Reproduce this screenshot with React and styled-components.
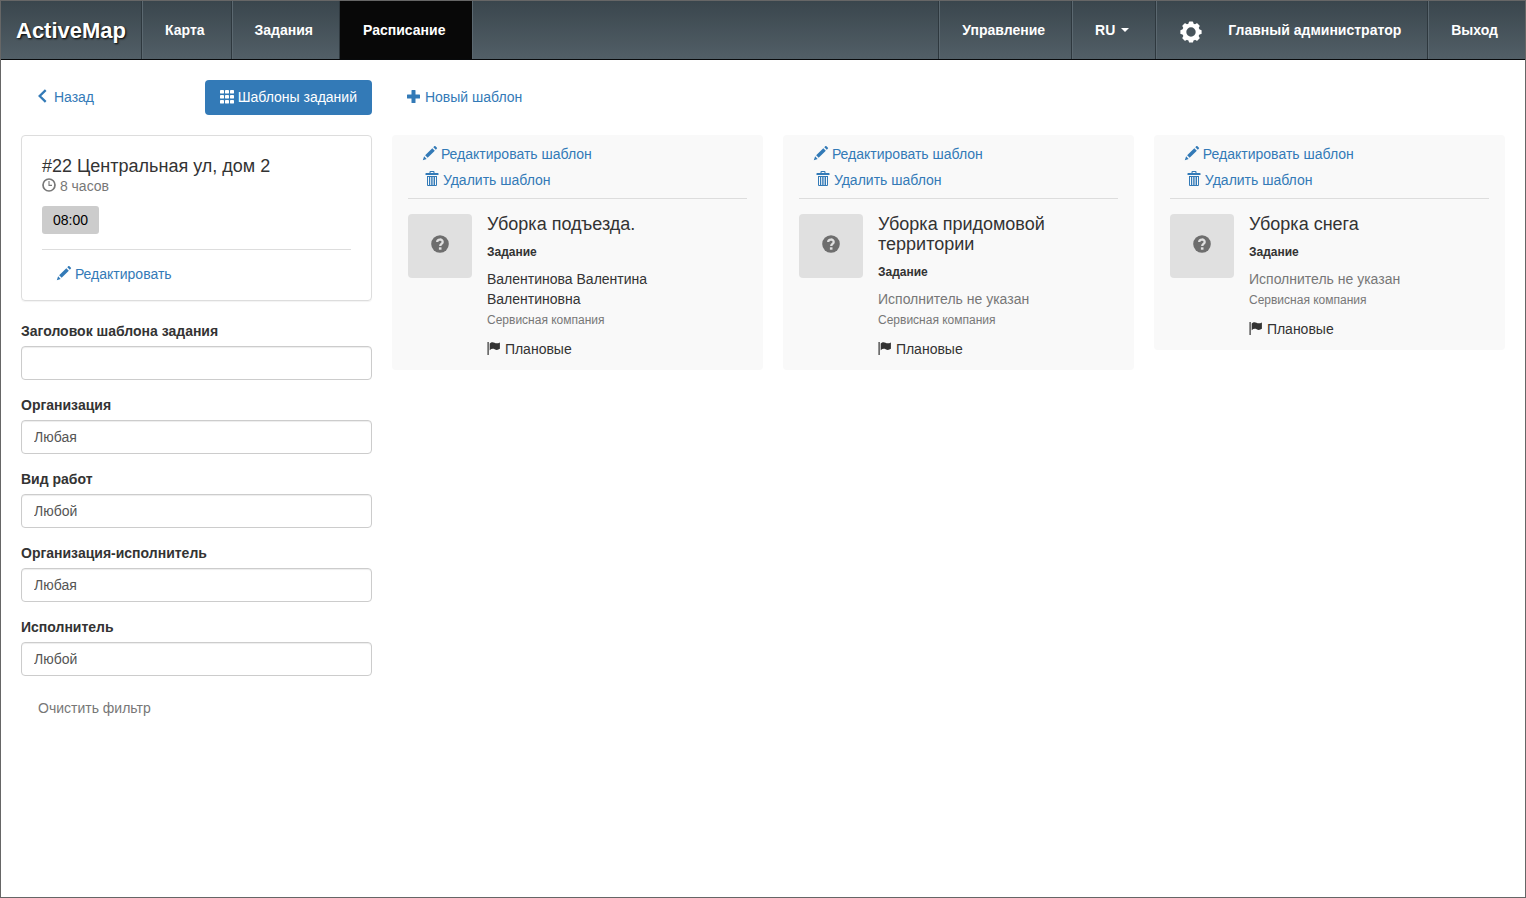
import styled, { createGlobalStyle, css } from "styled-components";
import { useState } from "react";

const templates = [
    {
        id: 1,
        title: "Уборка подъезда.",
        worker: "Валентинова Валентина Валентиновна",
        company: "Сервисная компания",
        kind: "Плановые",
    },
    {
        id: 2,
        title: "Уборка придомовой территории",
        worker: null,
        company: "Сервисная компания",
        kind: "Плановые",
    },
    {
        id: 3,
        title: "Уборка снега",
        worker: null,
        company: "Сервисная компания",
        kind: "Плановые",
    },
];

const emptyFilter = {
    title: "",
    org: "Любая",
    work: "Любой",
    workerOrg: "Любая",
    worker: "Любой",
};

const filterFields = [
    { name: "title", label: "Заголовок шаблона задания" },
    { name: "org", label: "Организация" },
    { name: "work", label: "Вид работ" },
    { name: "workerOrg", label: "Организация-исполнитель" },
    { name: "worker", label: "Исполнитель" },
];

const BackIcon = () => (
    <Icon viewBox="0 0 14 14">
        <path d="M9.700 1.200 L3.700 7 L9.700 12.800" fill="none" stroke="currentColor" strokeWidth="2.300" />
    </Icon>
);

const GridIcon = () => (
    <Icon viewBox="0 0 14 14">
        {[1, 6, 11].map((y) =>
            [0, 5, 10].map((x) => <rect key={`${x}-${y}`} x={x} y={y} width="4" height="3.500" rx="0.400" />)
        )}
    </Icon>
);

const PlusIcon = () => (
    <Icon viewBox="0 0 14 14">
        <path d="M5 1h3a.5.5 0 0 1 .5.5v4h4a.5.5 0 0 1 .5.5v3a.5.5 0 0 1-.5.5h-4v4a.5.5 0 0 1-.5.5h-3a.5.5 0 0 1-.5-.5v-4h-4a.5.5 0 0 1-.5-.5v-3a.5.5 0 0 1 .5-.5h4v-4a.5.5 0 0 1 .5-.5z" />
    </Icon>
);

const PencilIcon = () => (
    <Icon viewBox="0 0 1200 1200">
        <g transform="translate(0 1200) scale(1 -1)">
            <path d="M1011 1210q19 0 33 -13l153 -153q13 -14 13 -33t-13 -33l-99 -92l-214 214l95 96q13 14 32 14zM1013 800l-615 -614l-214 214l614 614zM317 96l-333 -112l110 335z" />
        </g>
    </Icon>
);

const TrashIcon = () => (
    <Icon viewBox="0 0 14 14">
        <path
            fillRule="evenodd"
            d="M4.5 1V0q0-1 1-1h3q1 0 1 1v1H13q.5 0 .5.5V3H.5V1.500Q.5 1 1 1zM5.600 1h2.800V0H5.600zM2 4h10v9q0 1-1 1H3q-1 0-1-1zM3 5v8h1V5zM5.200 5v8h1V5zM7.600 5v8h1V5zM10 5v8h1V5z"
        />
    </Icon>
);

const ClockIcon = () => (
    <Icon viewBox="0 0 14 14">
        <circle cx="7" cy="7" r="6" fill="none" stroke="currentColor" strokeWidth="1.700" />
        <path d="M7 3V7.400H10" fill="none" stroke="currentColor" strokeWidth="1.100" />
    </Icon>
);

const FlagIcon = () => (
    <Icon viewBox="0 0 14 14">
        <rect x="0.500" y="1" width="1.200" height="13" />
        <path d="M2.700 2.500C4.500 .8 6 1 7.500 1.800S10.700 2.600 12.900 1.400V7.800C10.900 9.200 9.200 9.100 7.600 8.300S4.400 7.700 2.700 9.200z" />
    </Icon>
);

const QuestionIcon = () => (
    <BigIcon viewBox="0 0 18 18">
        <circle cx="9" cy="9" r="8.800" />
        <path d="M6.200 7.100C6.200 3.700 11.700 3.700 11.700 6.900C11.700 8.900 9.200 8.900 9.200 11" fill="none" stroke="#e0e0e0" strokeWidth="2.300" />
        <rect x="7.900" y="12.300" width="2.600" height="2.400" fill="#e0e0e0" />
    </BigIcon>
);

const GearIcon = () => (
    <Gear viewBox="0 0 22 22">
        <circle cx="11" cy="11" r="6.700" fill="none" stroke="currentColor" strokeWidth="4" />
        {[0, 45, 90, 135, 180, 225, 270, 315].map((angle) => (
            <path key={angle} d="M8.100 4L8.900 .9Q9 .4 9.600 .4H12.400Q13 .4 13.100 .9L13.900 4z" transform={`rotate(${angle} 11 11)`} />
        ))}
    </Gear>
);

function TemplateCard({ template }) {
    return (
        <Card>
            <CardActions>
                <TextLink href="#edit">
                    <PencilIcon /> Редактировать шаблон
                </TextLink>
                <TextLink href="#delete" $inset>
                    <TrashIcon /> Удалить шаблон
                </TextLink>
            </CardActions>
            <CardBody>
                <Avatar>
                    <QuestionIcon />
                </Avatar>
                <CardInfo>
                    <Title>{template.title}</Title>
                    <Category>Задание</Category>
                    <Worker $empty={!template.worker}>{template.worker || "Исполнитель не указан"}</Worker>
                    <Company>{template.company}</Company>
                    <Kind>
                        <FlagIcon /> {template.kind}
                    </Kind>
                </CardInfo>
            </CardBody>
        </Card>
    );
}

function App() {
    const [filter, setFilter] = useState(emptyFilter);

    const onChangeHandler = (event) => {
        setFilter({ ...filter, [event.target.name]: event.target.value });
    };

    return (
        <Page>
            <GlobalStyle />
            <Header>
                <Brand href="#home">ActiveMap</Brand>
                <NavLink href="#map">Карта</NavLink>
                <NavLink href="#tasks">Задания</NavLink>
                <NavLink href="#schedule" $active>
                    Расписание
                </NavLink>
                <Spacer />
                <NavLink href="#manage">Управление</NavLink>
                <NavButton type="button">
                    RU <Caret />
                </NavButton>
                <NavLink href="#profile">
                    <GearIcon />
                    Главный администратор
                </NavLink>
                <NavLink href="#logout" $last>
                    Выход
                </NavLink>
            </Header>
            <Content>
                <Sidebar>
                    <Toolbar>
                        <ButtonLink href="#back">
                            <BackIcon /> Назад
                        </ButtonLink>
                        <PrimaryButton type="button">
                            <GridIcon /> Шаблоны заданий
                        </PrimaryButton>
                    </Toolbar>
                    <Panel>
                        <Title>#22 Центральная ул, дом 2</Title>
                        <Duration>
                            <ClockIcon /> 8 часов
                        </Duration>
                        <Time>08:00</Time>
                        <PanelFooter>
                            <TextLink href="#edit-schedule">
                                <PencilIcon /> Редактировать
                            </TextLink>
                        </PanelFooter>
                    </Panel>
                    <form>
                        {filterFields.map((field) => (
                            <Field key={field.name}>
                                <Label htmlFor={field.name}>{field.label}</Label>
                                <Input
                                    id={field.name}
                                    name={field.name}
                                    type="text"
                                    value={filter[field.name]}
                                    onChange={onChangeHandler}
                                />
                            </Field>
                        ))}
                        <ClearButton type="button" onClick={() => setFilter(emptyFilter)}>
                            Очистить фильтр
                        </ClearButton>
                    </form>
                </Sidebar>
                <Main>
                    <Toolbar>
                        <ButtonLink href="#new">
                            <PlusIcon /> Новый шаблон
                        </ButtonLink>
                    </Toolbar>
                    <Cards>
                        {templates.map((template) => (
                            <TemplateCard key={template.id} template={template} />
                        ))}
                    </Cards>
                </Main>
            </Content>
        </Page>
    );
}

export default App;

const GlobalStyle = createGlobalStyle`
    * {
        box-sizing: border-box;
    }

    body {
        margin: 0;
        color: #333;
        background: #fff;
        font-family: "Liberation Sans", Arial, sans-serif;
        font-size: 14px;
        line-height: 20px;
    }

    button,
    input {
        font: inherit;
    }

    a {
        text-decoration: none;
    }
`;

const Page = styled.div`
    min-height: 100vh;
    border: 1px solid #666;
`;

const Header = styled.header`
    display: flex;
    height: 59px;
    border-bottom: 1px solid #080a0c;
    background: linear-gradient(#3a464d, #525f67);
`;

const Brand = styled.a`
    padding: 0 15px;
    border-right: 1px solid #2e383e;
    color: #fff;
    font-size: 22px;
    font-weight: bold;
    line-height: 59px;
    text-shadow: 1px 1px 2px #000;
`;

const navItem = css`
    display: flex;
    align-items: center;
    padding: 0 27px 0 22px;
    border: 0;
    border-left: 1px solid #5b6870;
    color: #fff;
    background: transparent;
    font-weight: bold;
    white-space: nowrap;
    box-shadow: inset -1px 0 #2e383e;
`;

const NavLink = styled.a`
    ${navItem}
    ${(props) =>
        props.$active &&
        css`
            border-color: #080808;
            background: #080808;
            box-shadow: none;
        `}
    ${(props) => props.$last && "box-shadow: none;"}
`;

const NavButton = styled.button`
    ${navItem}
`;

const Spacer = styled.div`
    flex: 1;
    border-left: 1px solid #5b6870;
    border-right: 1px solid #2e383e;
`;

const Caret = styled.span`
    margin-left: 6px;
    border-top: 4px solid #fff;
    border-left: 4px solid transparent;
    border-right: 4px solid transparent;
`;

const Gear = styled.svg`
    width: 22px;
    height: 22px;
    margin: 3px 26px 0 1px;
    fill: currentColor;
`;

const Icon = styled.svg`
    width: 14px;
    height: 14px;
    vertical-align: -1px;
    fill: currentColor;
    overflow: visible;
`;

const BigIcon = styled.svg`
    width: 18px;
    height: 18px;
    fill: #6e6e6e;
`;

const Content = styled.div`
    display: flex;
    align-items: flex-start;
    padding: 20px;
`;

const Sidebar = styled.aside`
    width: 25%;
    padding-right: 20px;
`;

const Main = styled.main`
    width: 75%;
`;

const Toolbar = styled.div`
    display: flex;
    justify-content: space-between;
    margin-bottom: 20px;
`;

const ButtonLink = styled.a`
    height: 35px;
    padding: 7px 15px;
    color: #337ab7;
`;

const PrimaryButton = styled.button`
    height: 35px;
    padding: 7px 15px 8px;
    border: 0;
    border-radius: 4px;
    color: #fff;
    background: #337ab7;
`;

const Panel = styled.section`
    margin-bottom: 20px;
    padding: 20px 20px 16px;
    border: 1px solid #ddd;
    border-radius: 4px;
    box-shadow: 0 1px 1px rgba(0, 0, 0, 0.05);
`;

const Title = styled.h4`
    margin: 0;
    font-size: 18px;
    font-weight: normal;
    line-height: 20px;
`;

const Duration = styled.div`
    color: #777;
`;

const Time = styled.span`
    display: inline-block;
    margin: 10px 0 15px;
    padding: 4px 11px;
    border-radius: 3px;
    color: #000;
    background: #ccc;
`;

const PanelFooter = styled.div`
    padding-top: 14px;
    border-top: 1px solid #ddd;
`;

const TextLink = styled.a`
    display: block;
    padding-left: ${(props) => (props.$inset ? "17px" : "15px")};
    color: #337ab7;
`;

const Field = styled.div`
    margin-bottom: 15px;
`;

const Label = styled.label`
    display: block;
    margin-bottom: 5px;
    font-weight: bold;
`;

const Input = styled.input`
    display: block;
    width: 100%;
    height: 34px;
    padding: 6px 12px;
    border: 1px solid #ccc;
    border-radius: 4px;
    color: #555;
    background: #fff;
    box-shadow: inset 0 1px 1px rgba(0, 0, 0, 0.075);
`;

const ClearButton = styled.button`
    height: 34px;
    padding: 0 17px;
    border: 0;
    color: #777;
    background: transparent;
`;

const Cards = styled.div`
    display: flex;
    align-items: flex-start;
`;

const Card = styled.article`
    width: calc(100% / 3);
    padding: 9px 16px 11px;
    border-radius: 4px;
    background: #f9f9f9;

    & + & {
        width: calc(100% / 3 - 20px);
        margin-left: 20px;
    }
`;

const CardActions = styled.div`
    display: grid;
    gap: 6px;
    padding-bottom: 8px;
    border-bottom: 1px solid #ddd;
`;

const CardBody = styled.div`
    display: flex;
    align-items: flex-start;
    gap: 15px;
    padding-top: 15px;
`;

const Avatar = styled.div`
    display: flex;
    flex-shrink: 0;
    justify-content: center;
    width: 64px;
    height: 64px;
    padding-top: 21px;
    border-radius: 4px;
    background: #e0e0e0;
`;

const CardInfo = styled.div`
    flex: 1;
    padding-right: 10px;
`;

const Category = styled.div`
    margin: 9px 0 8px;
    font-size: 12px;
    font-weight: bold;
    line-height: 18px;
`;

const Worker = styled.div`
    color: ${(props) => (props.$empty ? "#777" : "#333")};
`;

const Company = styled.div`
    margin-bottom: 9px;
    padding-top: 1px;
    color: #777;
    font-size: 12px;
`;

const Kind = styled.div`
    color: #333;
`;
